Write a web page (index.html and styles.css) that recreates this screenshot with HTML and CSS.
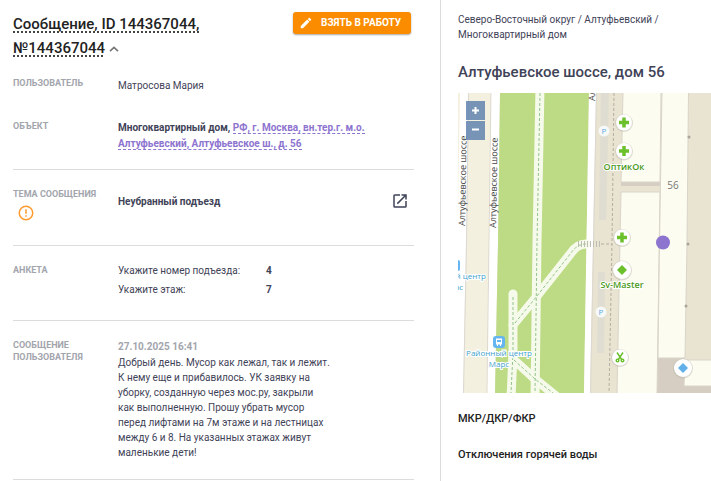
FILE: index.html
```html
<!DOCTYPE html>
<html lang="ru">
<head>
<meta charset="utf-8">
<meta name="viewport" content="width=device-width, initial-scale=1">
<title>Сообщение, ID 144367044</title>
<link rel="stylesheet" href="styles.css">
</head>
<body>
<div class="page">
  <main class="message">
    <header class="head">
      <h1 class="title"><span class="title-text">Сообщение, ID 144367044, №144367044</span>
        <button class="collapse" type="button" aria-label="Свернуть"><svg width="10" height="6" viewBox="0 0 10 6"><path d="M1 5.2 5 1.4 9 5.2" fill="none" stroke="#777" stroke-width="1.6"/></svg></button></h1>
      <button class="take" type="button">
        <svg width="14" height="14" viewBox="0 0 24 24"><path fill="#fff" d="M3 17.25V21h3.75L17.81 9.94l-3.75-3.75L3 17.25zM20.71 7.04a1 1 0 0 0 0-1.41l-2.34-2.34a1 1 0 0 0-1.41 0l-1.83 1.83 3.75 3.75 1.83-1.83z"/></svg>
        <span>ВЗЯТЬ В РАБОТУ</span>
      </button>
    </header>

    <section class="row user">
      <h2 class="label">ПОЛЬЗОВАТЕЛЬ</h2>
      <p class="value">Матросова Мария</p>
    </section>
    <section class="row object">
      <h2 class="label">ОБЪЕКТ</h2>
      <p class="value strong">Многоквартирный дом, <a class="address" href="#">РФ, г. Москва, вн.тер.г. м.о. Алтуфьевский, Алтуфьевское ш., д. 56</a></p>
    </section>
    <section class="row topic">
      <h2 class="label">ТЕМА СООБЩЕНИЯ
        <svg class="alert" width="18" height="18" viewBox="0 0 24 24"><path fill="#ff9a2e" d="M11 15h2v2h-2v-2zm0-8h2v6h-2V7zm1-5a10 10 0 1 0 0 20 10 10 0 0 0 0-20zm0 18a8 8 0 1 1 0-16 8 8 0 0 1 0 16z"/></svg>
      </h2>
      <p class="value strong">Неубранный подъезд</p>
      <a class="open" href="#" aria-label="Открыть"><svg width="18" height="18" viewBox="0 0 24 24"><path fill="#3f4358" d="M19 19H5V5h7V3H5a2 2 0 0 0-2 2v14a2 2 0 0 0 2 2h14a2 2 0 0 0 2-2v-7h-2v7zM14 3v2h3.59l-9.83 9.83 1.41 1.41L19 6.41V10h2V3h-7z"/></svg></a>
    </section>
    <section class="row survey">
      <h2 class="label">АНКЕТА</h2>
      <dl class="answers">
        <dt>Укажите номер подъезда:</dt><dd>4</dd>
        <dt>Укажите этаж:</dt><dd>7</dd>
      </dl>
    </section>
    <section class="row text">
      <h2 class="label">СООБЩЕНИЕ ПОЛЬЗОВАТЕЛЯ</h2>
      <div class="value body">
        <time class="date" datetime="2025-10-27T16:41">27.10.2025 16:41</time>
        <p>Добрый день. Мусор как лежал, так и лежит.<br>К нему еще и прибавилось. УК заявку на<br>уборку, созданную через мос.ру, закрыли<br>как выполненную. Прошу убрать мусор<br>перед лифтами на 7м этаже и на лестницах<br>между 6 и 8. На указанных этажах живут<br>маленькие дети!</p>
      </div>
    </section>
  </main>

  <aside class="place">
    <p class="crumbs">Северо-Восточный округ / Алтуфьевский / Многоквартирный дом</p>
    <h2 class="place-title">Алтуфьевское шоссе, дом 56</h2>
    <div class="map">
      <svg class="canvas" viewBox="0 0 253 300" preserveAspectRatio="xMinYMin slice">
        <rect width="253" height="300" fill="#e9e3d1"/>
        <!-- roads and lawns -->
        <path d="M0 0H33L29 300H0z" fill="#f4f0df"/>
        <path d="M2 0H10L8 150 5 300H0V120z" fill="#fff"/>
        <path d="M10.500 0 8.500 150 5.500 300M33 0 31 150 29 300" fill="none" stroke="#dcd8d2"/>
        <path d="M33.500 0H42L40 150 37 300H29.500L31.500 150z" fill="#fff"/>
        <path d="M42 0H131L128.500 150 126 300H37L40 150z" fill="#bddb85"/>
        <path d="M131 0H138L135 150 132 300H126L128.500 150z" fill="#fff"/>
        <path d="M138.500 0 135.500 150 132.500 300" fill="none" stroke="#dcd8d0"/>
        <path d="M143 0H151L148 127H141zM140 179H147L146 260H139z" fill="#dfddd1"/>
        <!-- footpaths -->
        <g fill="none" stroke="#f6faea" stroke-width="9" stroke-linecap="round">
          <path d="M82 -6 79 150 77 306"/>
          <path d="M55 201V260L53 306"/>
          <path d="M55 232 79 203 113 160Q119 151 128 151"/>
          <path d="M55 266 77 286 98 303"/>
        </g>
        <g fill="none" stroke="#93c48c" stroke-dasharray="3 2">
          <path d="M82 0 79 150 77 300M55 204V260L53 300"/>
          <path d="M57 230 79 203 113 160Q119 151 128 151M56 267 77 286 95 300"/>
        </g>
        <path d="M120 151H143" stroke="#bdbdb5" stroke-width="6" stroke-dasharray="1 2"/>
        <path d="M156 0 154 150 151 300M143 151H154" fill="none" stroke="#b5ada0" stroke-dasharray="3 2"/>
        <!-- buildings -->
        <path d="M163 89H202V93H163zM200 262H227V293H253V300H199z" fill="#d6cec2"/>
        <g fill="#fcfcf1" stroke="#d9d4c8">
          <path d="M165 -1H203L202 89H163z"/>
          <path d="M163 99H202L199 301H159z"/>
          <path d="M204 -1H230.500L229 150 227 265H200L201.500 150z"/>
          <path d="M227 267H254V293H226z"/>
        </g>
        <g fill="#aaa49b"><circle cx="231" cy="44" r="1.500"/><circle cx="230" cy="151" r="1.500"/><circle cx="228" cy="213" r="1.500"/></g>
        <!-- street names -->
        <g class="street">
          <text transform="translate(7 133) rotate(-89)">Алтуфьевское шоссе</text>
          <text transform="translate(38 135) rotate(-89)">Алтуфьевское шоссе</text>
          <text transform="translate(137 8) rotate(-89)">Алтуфьевское шоссе</text>
        </g>
        <!-- bus stops -->
        <rect x="-9" y="167" width="11" height="11" rx="2" fill="#64b5f0"/>
        <rect x="35" y="243" width="12" height="12" rx="3" fill="#64b5f0"/>
        <path d="M38 245.500h6v6h-1v1.500h-1v-1.500h-2v1.500h-1v-1.500h-1z" fill="#fff"/><path d="M39 247h4v2h-4z" fill="#64b5f0"/>
        <g class="stop">
          <text x="-5" y="186">Районный центр</text><text x="-5" y="197">Марс</text>
          <text x="41" y="263">Районный центр</text><text x="41" y="274">Марс</text>
        </g>
        <!-- points of interest -->
        <g fill="#b9b4aa" opacity=".45"><circle cx="166" cy="30" r="9"/><circle cx="166" cy="58.500" r="9"/><circle cx="164" cy="145" r="9"/><circle cx="164" cy="177.500" r="10"/><circle cx="162" cy="265" r="9"/><circle cx="225" cy="275.500" r="10"/></g>
        <g fill="#fff"><circle cx="166" cy="29.500" r="8"/><circle cx="166" cy="58" r="8"/><circle cx="164" cy="144.500" r="8"/><circle cx="164" cy="177" r="9"/><circle cx="162" cy="264.500" r="8"/><circle cx="225" cy="275" r="9"/></g>
        <path d="M166 24.500v10M161 29.500h10M166 53v10M161 58h10M164 139.500v10M159 144.500h10" stroke="#6cc02c" stroke-width="3.500"/>
        <path d="m164 172 5 5-5 5-5-5z" fill="#6cc02c"/>
        <path d="m225 270 5 5-5 5-5-5z" fill="#62b0ea"/>
        <g fill="none" stroke="#6cc02c" stroke-width="1.500"><path d="M159 259.500 164 267M165 259.500 160 267"/><circle cx="159.500" cy="267.500" r="1.300"/><circle cx="164.500" cy="267.500" r="1.300"/></g>
        <g fill="#f7f9f8"><circle cx="146" cy="38" r="5.500"/><circle cx="143" cy="219" r="5.500"/></g>
        <g class="parking"><text x="146" y="41">P</text><text x="143" y="222">P</text></g>
        <g class="poi"><text x="166" y="77">ОптикОк</text><text x="164" y="195">Sv-Master</text></g>
        <text class="house" x="215" y="96">56</text>
        <circle cx="205" cy="149.500" r="7" fill="#8d74cf"/>
      </svg>
      <div class="zoom">
        <button type="button" aria-label="Приблизить"><svg width="9" height="9" viewBox="0 0 9 9"><path d="M4.500 1v7M1 4.500h7" stroke="#fff" stroke-width="2"/></svg></button>
        <button type="button" aria-label="Отдалить"><svg width="9" height="9" viewBox="0 0 9 9"><path d="M1 3.500h7" stroke="#fff" stroke-width="2"/></svg></button>
      </div>
    </div>
    <h3 class="sub">МКР/ДКР/ФКР</h3>
    <h3 class="sub">Отключения горячей воды</h3>
  </aside>
</div>
</body>
</html>
```

FILE: styles.css
```css
* { box-sizing: border-box; }
body { margin: 0; background: #fff; color: #3f4358; font: 10px/16px Roboto, "Liberation Sans", sans-serif; }
h1, h2, h3, p, dl, dd { margin: 0; }
button { border: 0; padding: 0; font: inherit; cursor: pointer; }
svg { display: block; }

.page { display: grid; grid-template-columns: 441fr 270fr; min-height: 100vh; }
.message { border-right: 1px solid #dcdcdc; padding: 12px 26px 0 13px; }
.place { padding: 12px 0 0 17px; }

.head { display: flex; justify-content: space-between; align-items: flex-start; padding-right: 3px; }
.title { width: 200px; color: #222; font-size: 15px; line-height: 24px; font-weight: 500; }
.title-text { text-decoration: underline dotted 2px #444; text-underline-offset: 2px; text-decoration-skip-ink: none; }
.collapse { display: inline-block; background: none; vertical-align: middle; }
.take { display: flex; align-items: center; gap: 8px; height: 22px; padding: 0 10px 0 6px; border-radius: 3px; background: #fb8c00; color: #fff; font-size: 10px; font-weight: 700; box-shadow: 0 1px 2px rgba(0, 0, 0, .35); }

.row { display: grid; grid-template-columns: 105px 1fr auto; border-bottom: 1px solid #dcdcdc; }
.label { color: #a3a5ad; font-size: 9px; line-height: 12px; font-weight: 700; }
.strong { font-weight: 700; }
.user { border: 0; padding: 17px 0; }
.user .value { padding-top: 1px; }
.object { padding: 9px 0 17px; }
.object .value { max-width: 260px; }
.address { color: #8d74cf; text-decoration: none; border-bottom: 1px dashed #8d74cf; }
.topic { padding: 18px 0 23px; }
.topic .value { padding-top: 6px; }
.alert { margin: 4px 0 0 4px; }
.open { align-self: start; padding: 4px 5px 0 0; }
.survey { padding: 17px 0 22px; }
.answers { display: grid; grid-template-columns: 148px 1fr; row-gap: 3px; }
.survey .label { padding-top: 1px; }
.answers dd { font-weight: 700; }
.text { padding: 18px 0 19px; }
.body { line-height: 15px; }
.date { display: block; line-height: 16px; color: #a3a5ad; font-weight: 700; }

.crumbs { max-width: 220px; line-height: 15px; }
.place-title { margin-top: 18px; font-size: 15px; line-height: 24px; font-weight: 500; }
.map { position: relative; margin-top: 9px; height: 300px; overflow: hidden; }
.canvas { width: 100%; height: 100%; }
.zoom { position: absolute; left: 8px; top: 8px; display: grid; gap: 1px; }
.zoom button { display: grid; place-items: center; width: 19px; height: 19px; background: rgba(96, 132, 176, .85); }
.sub { margin-top: 16px; color: #222; font-size: 11px; line-height: 20px; font-weight: 500; }

.canvas text { font-family: "Open Sans", "Noto Sans", sans-serif; }
.street text { font-size: 9px; fill: #444; }
.stop text { font-size: 8px; fill: #3fa2cc; text-anchor: middle; stroke: #fff; stroke-width: 2px; paint-order: stroke; }
.poi text { font-size: 9px; font-weight: 600; fill: #4b9a1b; text-anchor: middle; stroke: #fff; stroke-width: 2px; paint-order: stroke; }
.parking text { font-size: 8px; fill: #5fabe3; text-anchor: middle; }
.canvas .house { font-size: 10px; fill: #777; text-anchor: middle; }
```
